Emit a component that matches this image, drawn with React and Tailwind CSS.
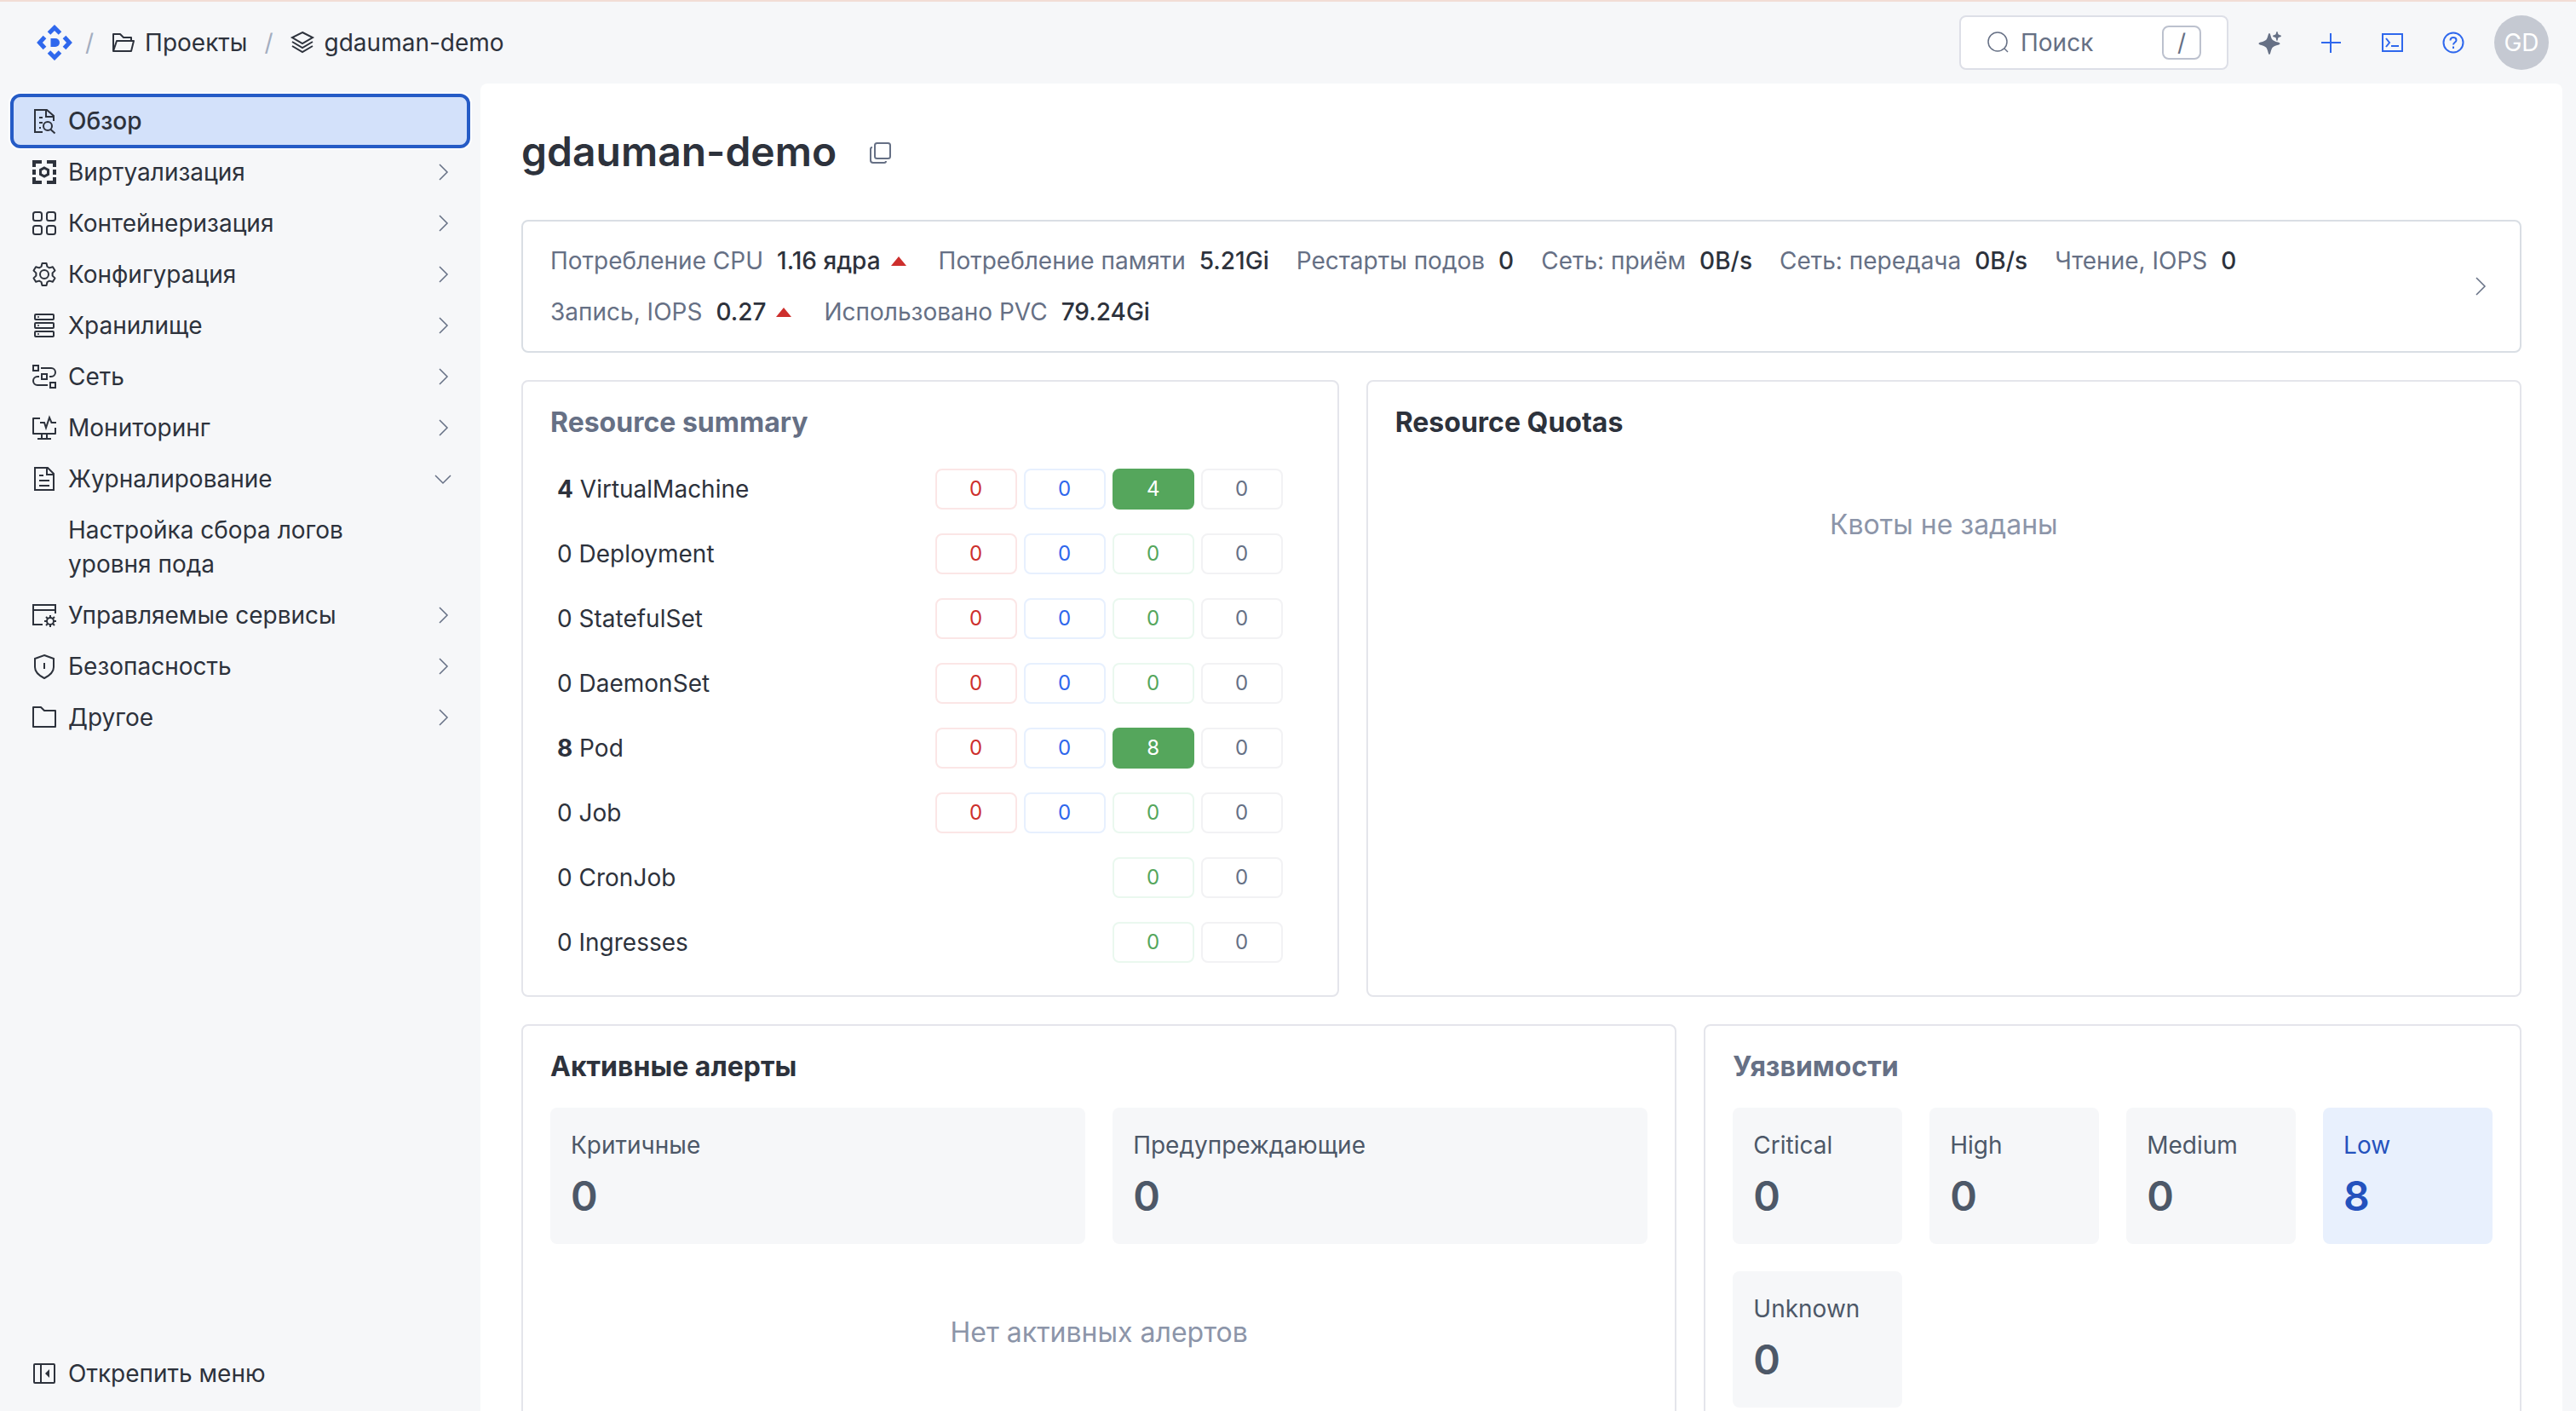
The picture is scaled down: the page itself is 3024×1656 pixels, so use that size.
import { useState } from 'react'

function Icon({ children, size = 32, className = '' }) {
  return (
    <svg
      width={size}
      height={size}
      viewBox="0 0 32 32"
      fill="none"
      stroke="currentColor"
      strokeWidth="2"
      className={`shrink-0 ${className}`}
      aria-hidden="true"
    >
      {children}
    </svg>
  )
}

const icons = {
  overview: (
    <Icon>
      <path d="M14 29H5V3h14l8 7v6" />
      <path d="M18 3v8h9M10 12h4M10 18h4M10 24h2" />
      <circle cx="20" cy="22" r="5" />
      <path d="M23.500 26l5 4.500" />
    </Icon>
  ),
  virtualization: (
    <Icon>
      <path d="M4 10V4h9M19 4h9v6M4 22v6h9M19 28h9v-6M4 13v6M28 13v6" strokeWidth="4" />
      <path d="M16 11l4.500 2.500v5L16 21l-4.500-2.500v-5z" strokeWidth="3" />
    </Icon>
  ),
  containers: (
    <Icon>
      <rect x="3" y="3" width="10" height="10" rx="2.500" />
      <rect x="19" y="3" width="10" height="10" rx="2.500" />
      <rect x="3" y="19" width="10" height="10" rx="2.500" />
      <rect x="19" y="19" width="10" height="10" rx="2.500" />
    </Icon>
  ),
  config: (
    <Icon>
      <path
        d="M13.500 3h5l1 4 2.500 1.400 3.900-1.200 2.600 4.400-2.900 2.800v3.200l2.900 2.800-2.600 4.400-3.900-1.200-2.500 1.400-1 4h-5l-1-4L10 23.600l-3.900 1.200-2.600-4.400 2.900-2.800v-3.200l-2.900-2.800 2.600-4.400L10 8.400 12.500 7z"
        strokeLinejoin="round"
      />
      <circle cx="16" cy="16" r="5" />
    </Icon>
  ),
  storage: (
    <Icon>
      <rect x="5" y="3" width="22" height="6" rx="1" />
      <rect x="5" y="13" width="22" height="6" rx="1" />
      <rect x="5" y="23" width="22" height="6" rx="1" />
      <path d="M8 6h2M8 16h2M8 26h2" strokeWidth="1.500" />
    </Icon>
  ),
  network: (
    <Icon>
      <path d="M3 3h6v6H3zM13 13h6v6h-6zM23 23h6v6h-6z" />
      <path d="M12 6h12a5 5 0 0 1 0 10h-2M10 16H8a5 5 0 0 0 0 10h12" />
    </Icon>
  ),
  monitoring: (
    <Icon>
      <path d="M11 5H3v18h26v-7" strokeLinejoin="round" />
      <path d="M11 10h5l2 6 4-12 2.500 6H30M13 23v6M19 23v6M8 29h16" />
    </Icon>
  ),
  logging: (
    <Icon>
      <path d="M5 3h15l7 7v19H5z" />
      <path d="M19 3v8h8M10 12h5M10 18h12M10 24h12" />
    </Icon>
  ),
  services: (
    <Icon>
      <path d="M14 27H3V4h26v10M3 10h26" />
      <circle cx="23" cy="23" r="4" />
      <path d="M23 16v3M23 27v3M16 23h3M27 23h3M18 18l2 2M26 26l2 2M28 18l-2 2M20 26l-2 2" />
    </Icon>
  ),
  security: (
    <Icon>
      <path d="M16 3l11 4v10c0 6-5 10-11 13C10 27 5 23 5 17V7z" />
      <path d="M16 12v7" />
    </Icon>
  ),
  other: (
    <Icon>
      <path d="M3 27V4h9l4 4h13v19z" strokeLinejoin="round" />
    </Icon>
  ),
}

function ChevronRight() {
  return (
    <Icon className="text-[#667085]">
      <path d="M12 7l9 9-9 9" strokeWidth="1.500" />
    </Icon>
  )
}

function ChevronDown() {
  return (
    <Icon className="text-[#667085]">
      <path d="M7 12l9 9 9-9" strokeWidth="1.500" />
    </Icon>
  )
}

const menu = [
  { id: 'overview', label: 'Обзор', leaf: true },
  { id: 'virtualization', label: 'Виртуализация' },
  { id: 'containers', label: 'Контейнеризация' },
  { id: 'config', label: 'Конфигурация' },
  { id: 'storage', label: 'Хранилище' },
  { id: 'network', label: 'Сеть' },
  { id: 'monitoring', label: 'Мониторинг' },
  { id: 'logging', label: 'Журналирование', children: ['Настройка сбора логов уровня пода'] },
  { id: 'services', label: 'Управляемые сервисы' },
  { id: 'security', label: 'Безопасность' },
  { id: 'other', label: 'Другое' },
]

const metrics = [
  { label: 'Потребление CPU', value: '1.16 ядра', up: true },
  { label: 'Потребление памяти', value: '5.21Gi' },
  { label: 'Рестарты подов', value: '0' },
  { label: 'Сеть: приём', value: '0B/s' },
  { label: 'Сеть: передача', value: '0B/s' },
  { label: 'Чтение, IOPS', value: '0' },
  { label: 'Запись, IOPS', value: '0.27', up: true },
  { label: 'Использовано PVC', value: '79.24Gi' },
]

const resources = [
  { name: 'VirtualMachine', total: 4, counts: [0, 0, 4, 0] },
  { name: 'Deployment', total: 0, counts: [0, 0, 0, 0] },
  { name: 'StatefulSet', total: 0, counts: [0, 0, 0, 0] },
  { name: 'DaemonSet', total: 0, counts: [0, 0, 0, 0] },
  { name: 'Pod', total: 8, counts: [0, 0, 8, 0] },
  { name: 'Job', total: 0, counts: [0, 0, 0, 0] },
  { name: 'CronJob', total: 0, counts: [null, null, 0, 0] },
  { name: 'Ingresses', total: 0, counts: [null, null, 0, 0] },
]

const badgeStyles = [
  'border-[#fbe6e6] text-[#cd2f2d]',
  'border-[#e7f0fe] text-[#2f67ec]',
  'border-[#eaf8ef] text-[#55a65c]',
  'border-[#f2f2f4] text-[#667085]',
]

const vulnerabilities = [
  { label: 'Critical', value: 0 },
  { label: 'High', value: 0 },
  { label: 'Medium', value: 0 },
  { label: 'Low', value: 8 },
  { label: 'Unknown', value: 0 },
]

function Header() {
  return (
    <header className="flex h-[98px] shrink-0 items-center justify-between border-t-2 border-[#f2ddd5] pr-8 pl-10">
      <nav className="flex items-center">
        <a href="#" aria-label="Главная" className="mr-3">
          <svg width="48" height="48" viewBox="0 0 48 48" fill="none" stroke="#2f68ed" strokeWidth="5" aria-hidden="true">
            <path d="M17.500 13l6.500-6.500 6.500 6.500M17.500 35l6.500 6.500 6.500-6.500M12.500 17.500L6.500 24l6 6.500M35.500 17.500l6 6.500-6 6.500" />
            <path d="M19.500 19H25a5 5 0 0 1 0 10h-5.500z" fill="#2f68ed" stroke="none" />
          </svg>
        </a>
        <span className="text-[#a3adbf]">/</span>
        <a href="#" className="mr-5 ml-[18px] flex items-center gap-2.5">
          <Icon>
            <path d="M5 26V6h8l4 4h9v4M5 26l4-12h20l-3 12z" strokeLinejoin="round" />
          </Icon>
          Проекты
        </a>
        <span className="text-[#a3adbf]">/</span>
        <a href="#" className="ml-[18px] flex items-center gap-2.5">
          <Icon>
            <path d="M16 4l12 6-12 7L4 10z" />
            <path d="M4 15l12 7 12-7M4 20l12 7 12-7" />
          </Icon>
          gdauman-demo
        </a>
      </nav>

      <div className="flex items-center gap-4">
        <label className="flex h-16 w-[316px] items-center rounded-lg border-2 border-[#dddfe7] bg-white pr-[30px] pl-7 text-[#667085]">
          <Icon>
            <circle cx="15" cy="15" r="11" strokeWidth="1.500" />
            <path d="M23 23l4 4" strokeWidth="1.500" />
          </Icon>
          <input
            type="text"
            placeholder="Поиск"
            className="ml-2.5 w-0 min-w-0 flex-1 bg-transparent outline-none placeholder:text-[#667085]"
          />
          <kbd className="flex h-10 w-[46px] items-center justify-center rounded-lg border-2 border-[#bcc1ce] [font-family:inherit]">
            /
          </kbd>
        </label>
        <div className="flex gap-2 text-[#2f68ed]">
          <button aria-label="Ассистент" className="flex size-16 items-center justify-center text-[#667085]">
            <svg width="32" height="32" viewBox="0 0 32 32" fill="currentColor" aria-hidden="true">
              <path d="M16 5c1.500 0 1.500 5 3.500 7.500 2 2.500 9 3 9 4.700s-6 1.800-8.500 4.300S17.500 30 16 30s-1.500-6-4-8.500-8.500-2.600-8.500-4.300 7-2.200 9-4.700S14.500 5 16 5z" />
              <path d="M25 3c1 0 .8 2.300 1.500 3.200.8.900 3.500.8 3.500 2s-2.700 1.200-3.500 2.100c-.7.900-.5 3.700-1.500 3.700s-.8-2.800-1.500-3.700c-.8-.9-3.500-.9-3.500-2.100s2.700-1.100 3.500-2C24.200 5.300 24 3 25 3z" />
            </svg>
          </button>
          <button aria-label="Создать" className="flex size-16 items-center justify-center">
            <Icon>
              <path d="M16 5v23M5 16h23" />
            </Icon>
          </button>
          <button aria-label="Терминал" className="flex size-16 items-center justify-center">
            <Icon>
              <path d="M5 6h23v20H5zM9 11l4 5-4 5M15 20h9" />
            </Icon>
          </button>
          <button aria-label="Справка" className="flex size-16 items-center justify-center">
            <Icon>
              <circle cx="16" cy="16" r="11.500" />
              <path d="M12.500 13.500c0-2 1.500-3.500 3.500-3.500s3.500 1.300 3.500 3.200c0 2.600-3.500 2.600-3.500 5.300M16 20.500v2.500" />
            </Icon>
          </button>
        </div>
        <button className="size-16 rounded-full bg-[#c5c9d2] text-white">GD</button>
      </div>
    </header>
  )
}

function Sidebar() {
  const [active, setActive] = useState('overview')

  return (
    <aside className="flex w-[564px] shrink-0 flex-col justify-between p-4">
      <nav className="flex flex-col gap-1">
        {menu.map((item) => (
          <div key={item.id} className="flex flex-col gap-1">
            <button
              onClick={() => setActive(item.id)}
              className={`flex items-center gap-3 rounded-lg py-2 pr-3 pl-5 text-left ${
                active === item.id
                  ? 'bg-[#d3e1fa] font-medium shadow-[0_0_0_6px_white] outline-4 outline-[#255bc6]'
                  : ''
              }`}
            >
              {icons[item.id]}
              <span className="flex-1">{item.label}</span>
              {!item.leaf && (item.children ? <ChevronDown /> : <ChevronRight />)}
            </button>
            {item.children?.map((child) => (
              <a key={child} href="#" className="py-2 pr-24 pl-16">
                {child}
              </a>
            ))}
          </div>
        ))}
      </nav>
      <button className="flex items-center gap-3 py-2 pl-5 text-left">
        <Icon>
          <rect x="4" y="5" width="24" height="22" rx="1" />
          <path d="M12 5v22" />
          <path d="M22 11v10l-5-5z" fill="currentColor" stroke="none" />
        </Icon>
        Открепить меню
      </button>
    </aside>
  )
}

function Metrics() {
  return (
    <section className="flex items-center rounded-lg border-2 border-[#d9dee4] py-[26px] pr-[30px] pl-8">
      <div className="flex flex-1 flex-wrap gap-x-8 gap-y-5">
        {metrics.map((m) => (
          <div key={m.label} className="flex items-center">
            <span className="mr-4 text-[#667085]">{m.label}</span>
            <span className="font-medium">{m.value}</span>
            {m.up && (
              <Icon className="ml-1 text-[#cd2f2d]">
                <path d="M17 11l9 11H8z" fill="currentColor" stroke="none" />
              </Icon>
            )}
          </div>
        ))}
      </div>
      <button aria-label="Подробнее">
        <Icon className="text-[#667085]">
          <path d="M11 6l10 10-10 10" strokeWidth="1.500" />
        </Icon>
      </button>
    </section>
  )
}

function Card({ title, muted, className, children }) {
  return (
    <section className={`rounded-lg border-2 border-[#e4e5eb] px-8 py-6 ${className}`}>
      <h2 className={`text-[32px] leading-12 font-bold ${muted ? 'text-[#667085]' : ''}`}>{title}</h2>
      {children}
    </section>
  )
}

function ResourceRow({ name, total, counts }) {
  return (
    <tr className="h-[76px]">
      <th scope="row" className="pl-2 text-left font-normal">
        <span className={total ? 'font-bold' : ''}>{total}</span> {name}
      </th>
      {counts.map((count, i) => (
        <td key={i} className="w-[104px] pl-2">
          {count !== null && (
            <div
              className={`flex h-12 items-center justify-center rounded-lg border-2 text-2xl ${
                count ? 'border-[#55a65c] bg-[#55a65c] text-white' : badgeStyles[i]
              }`}
            >
              {count}
            </div>
          )}
        </td>
      ))}
    </tr>
  )
}

function Tile({ label, value, active }) {
  return (
    <div className={`rounded-lg p-6 ${active ? 'bg-[#e8f0fd] text-[#2452bd]' : 'bg-[#f6f7f9] text-[#4d5868]'}`}>
      <p>{label}</p>
      <p className="mt-2 text-5xl leading-16 font-semibold">{value}</p>
    </div>
  )
}

export default function App() {
  return (
    <div className="flex h-screen flex-col overflow-hidden bg-[#f6f7f9] [font-family:Inter,sans-serif] text-[28px] leading-10 text-[#2d323c]">
      <Header />
      <div className="flex min-h-0 flex-1">
        <Sidebar />
        <main className="mr-4 min-w-0 flex-1 overflow-y-auto rounded-t-lg bg-white px-12 pt-12 [scrollbar-width:none]">
          <div className="mb-12 flex items-center gap-9">
            <h1 className="text-5xl leading-16 font-semibold">gdauman-demo</h1>
            <button aria-label="Скопировать" className="text-[#667085]">
              <Icon>
                <rect x="9" y="6" width="18" height="18" rx="2.500" />
                <path d="M6 11c-1 0-2 1-2 2v13c0 2 1 3 3 3h13c1 0 2-1 2-2" />
              </Icon>
            </button>
          </div>

          <Metrics />

          <div className="mt-8 grid grid-cols-12 gap-8">
            <Card title="Resource summary" muted className="col-span-5">
              <table className="mt-4 mr-8 w-[calc(100%-32px)]">
                <tbody>
                  {resources.map((r) => (
                    <ResourceRow key={r.name} {...r} />
                  ))}
                </tbody>
              </table>
            </Card>

            <Card title="Resource Quotas" className="col-span-7">
              <p className="mt-18 text-center text-[32px] leading-12 text-[#8c95a9]">Квоты не заданы</p>
            </Card>

            <Card title="Активные алерты" className="col-span-7">
              <div className="mt-6 grid grid-cols-2 gap-8">
                <Tile label="Критичные" value={0} />
                <Tile label="Предупреждающие" value={0} />
              </div>
              <p className="my-20 text-center text-[32px] leading-12 text-[#8c95a9]">Нет активных алертов</p>
            </Card>

            <Card title="Уязвимости" muted className="col-span-5">
              <div className="mt-6 grid grid-cols-4 gap-8">
                {vulnerabilities.map((v) => (
                  <Tile key={v.label} {...v} active={v.value > 0} />
                ))}
              </div>
            </Card>
          </div>
        </main>
      </div>
    </div>
  )
}
